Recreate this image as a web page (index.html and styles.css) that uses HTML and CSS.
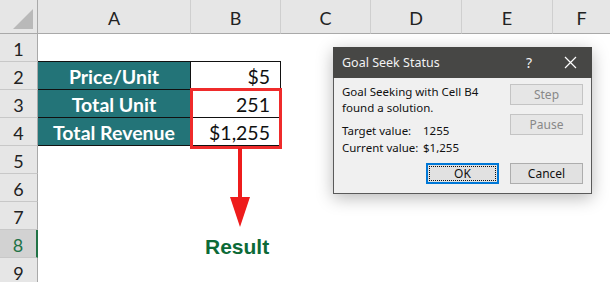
FILE: index.html
```html
<!DOCTYPE html>
<html lang="en">
<head>
    <meta charset="UTF-8">
    <meta name="viewport" content="width=device-width, initial-scale=1.0">
    <title>Goal Seek Status</title>
    <link rel="stylesheet" href="styles.css">
</head>
<body>

    <div class="sheet">
        <!-- column headers -->
        <div class="corner"><span class="corner-tri"></span></div>
        <div class="col-head">A</div>
        <div class="col-head">B</div>
        <div class="col-head">C</div>
        <div class="col-head">D</div>
        <div class="col-head">E</div>
        <div class="col-head last">F</div>

        <!-- row 1 -->
        <div class="row-head">1</div>
        <div class="cell"></div><div class="cell"></div><div class="cell"></div><div class="cell"></div><div class="cell"></div><div class="cell"></div>

        <!-- row 2 -->
        <div class="row-head">2</div>
        <div class="cell label top">Price/Unit</div>
        <div class="cell value top">$5</div>
        <div class="cell"></div><div class="cell"></div><div class="cell"></div><div class="cell"></div>

        <!-- row 3 -->
        <div class="row-head">3</div>
        <div class="cell label">Total Unit</div>
        <div class="cell value">251</div>
        <div class="cell"></div><div class="cell"></div><div class="cell"></div><div class="cell"></div>

        <!-- row 4 -->
        <div class="row-head">4</div>
        <div class="cell label">Total Revenue</div>
        <div class="cell value">$1,255</div>
        <div class="cell"></div><div class="cell"></div><div class="cell"></div><div class="cell"></div>

        <div class="row-head">5</div>
        <div class="cell"></div><div class="cell"></div><div class="cell"></div><div class="cell"></div><div class="cell"></div><div class="cell"></div>
        <div class="row-head">6</div>
        <div class="cell"></div><div class="cell"></div><div class="cell"></div><div class="cell"></div><div class="cell"></div><div class="cell"></div>
        <div class="row-head">7</div>
        <div class="cell"></div><div class="cell"></div><div class="cell"></div><div class="cell"></div><div class="cell"></div><div class="cell"></div>
        <div class="row-head active">8</div>
        <div class="cell"></div><div class="cell"></div><div class="cell"></div><div class="cell"></div><div class="cell"></div><div class="cell"></div>
        <div class="row-head">9</div>
        <div class="cell"></div><div class="cell"></div><div class="cell"></div><div class="cell"></div><div class="cell"></div><div class="cell"></div>

        <!-- highlight and arrow -->
        <div class="highlight"></div>
        <svg class="arrow" width="22" height="80" viewBox="0 0 22 80">
            <rect x="9" y="0" width="4" height="50" fill="#ee1c1c"/>
            <polygon points="1,49 21,49 11,79" fill="#ee1c1c"/>
        </svg>
        <div class="result">Result</div>

        <!-- dialog -->
        <div class="dialog">
            <div class="dialog-title">
                <span>Goal Seek Status</span>
                <span class="title-btns">
                    <span class="help">?</span>
                    <svg class="close" width="13" height="13" viewBox="0 0 13 13">
                        <path d="M1 1 L12 12 M12 1 L1 12" stroke="#fff" stroke-width="1.2"/>
                    </svg>
                </span>
            </div>
            <div class="dialog-body">
                <div class="dialog-info">
                    <p class="msg">Goal Seeking with Cell B4<br>found a solution.</p>
                    <div class="vals">
                        <span>Target value:</span><span>1255</span>
                        <span>Current value:</span><span>$1,255</span>
                    </div>
                </div>
                <div class="side-btns">
                    <button class="btn" disabled>Step</button>
                    <button class="btn" disabled>Pause</button>
                </div>
            </div>
            <div class="dialog-foot">
                <button class="btn ok"><span class="focus">OK</span></button>
                <button class="btn">Cancel</button>
            </div>
        </div>
    </div>

</body>
</html>
```

FILE: styles.css
```css
body {
    margin: 0;
    background-color: #fff;
    font-family: Lato, "Liberation Sans", sans-serif;
    overflow: hidden;
}
.sheet {
    position: relative;
    display: grid;
    grid-template-columns: 38px 153px 90px 90px 91px 91px 57px;
    grid-template-rows: 34px repeat(9, 28px);
    width: 610px;
    height: 282px;
}
.corner {
    position: relative;
    background-color: #e6e6e6;
    border-right: 1px solid #a9a9a9;
    border-bottom: 1px solid #a9a9a9;
}
.corner-tri {
    position: absolute;
    right: 4px;
    bottom: 4px;
    width: 0;
    height: 0;
    border-left: 20px solid transparent;
    border-bottom: 20px solid #b9b9b9;
}
.col-head {
    display: flex;
    align-items: center;
    justify-content: center;
    background-color: #e6e6e6;
    border-right: 1px solid #cfcfcf;
    border-bottom: 1px solid #a9a9a9;
    font-family: Lato, sans-serif;
    font-size: 18px;
    color: #222;
    padding-top: 2px;
}
.col-head.last {
    border-right: none;
}
.row-head {
    display: flex;
    align-items: center;
    justify-content: center;
    background-color: #e6e6e6;
    border-right: 1px solid #a9a9a9;
    border-bottom: 1px solid #c8c8c8;
    font-family: Lato, sans-serif;
    font-size: 18px;
    color: #222;
    padding-top: 2px;
}
.row-head.active {
    background-color: #d2d2d2;
    color: #217346;
    border-right: 2px solid #217346;
}
.cell {
    background-color: #fff;
}
.label {
    display: flex;
    align-items: center;
    justify-content: center;
    background-color: #237478;
    color: #fff;
    font-weight: bold;
    font-size: 19.5px;
    border-bottom: 1px solid #111;
    border-right: 1px solid #111;
    padding-top: 1px;
}
.value {
    display: flex;
    align-items: center;
    justify-content: flex-end;
    padding-right: 10px;
    color: #111;
    font-size: 19.5px;
    border-bottom: 1px solid #111;
    border-right: 1px solid #111;
    padding-top: 1px;
}
.top {
    border-top: 1px solid #111;
    margin-top: -1px;
}
.highlight {
    position: absolute;
    left: 190px;
    top: 88px;
    width: 86px;
    height: 55px;
    border: 3px solid #ef2b2b;
}
.arrow {
    position: absolute;
    left: 229px;
    top: 148px;
}
.result {
    position: absolute;
    left: 205px;
    top: 235px;
    font-family: "Liberation Sans", sans-serif;
    font-weight: bold;
    font-size: 21px;
    color: #0c6a37;
}

/* dialog */
.dialog {
    position: absolute;
    left: 333px;
    top: 47px;
    width: 259px;
    height: 147px;
    box-sizing: border-box;
    background-color: #f0f0f0;
    border: 1px solid #5a5a5a;
    border-top: none;
    box-shadow: 0 4px 16px rgba(0, 0, 0, 0.28);
    font-family: "Noto Sans", sans-serif;
    font-size: 11.5px;
    color: #111;
}
.dialog-title {
    display: flex;
    align-items: center;
    justify-content: space-between;
    height: 31px;
    margin: 0 -1px;
    padding: 0 15px 0 9px;
    background-color: #474745;
    color: #f2f2f2;
    font-size: 12.5px;
}
.title-btns {
    display: flex;
    align-items: center;
    gap: 32px;
}
.help {
    font-size: 14px;
}
.dialog-body {
    display: flex;
    justify-content: space-between;
    padding: 6px 8px 0 8px;
}
.msg {
    margin: 0;
    line-height: 16px;
}
.vals {
    display: grid;
    grid-template-columns: 81px auto;
    margin-top: 6px;
    line-height: 17px;
    white-space: nowrap;
}
.side-btns {
    display: flex;
    flex-direction: column;
    gap: 9px;
}
.btn {
    width: 73px;
    height: 21px;
    box-sizing: border-box;
    background-color: #e1e1e1;
    border: 1px solid #adadad;
    font-family: "Noto Sans", sans-serif;
    font-size: 12px;
    color: #111;
    padding: 0;
}
.btn:disabled {
    background-color: #e6e6e6;
    border-color: #c4c4c4;
    color: #888;
}
.dialog-foot {
    display: flex;
    justify-content: flex-end;
    gap: 11px;
    padding: 7px 8px 0 0;
}
.ok {
    border: 2px solid #0078d7;
    padding: 1px;
}
.focus {
    display: flex;
    align-items: center;
    justify-content: center;
    height: 100%;
    border: 1px dotted #111;
    box-sizing: border-box;
}
```
